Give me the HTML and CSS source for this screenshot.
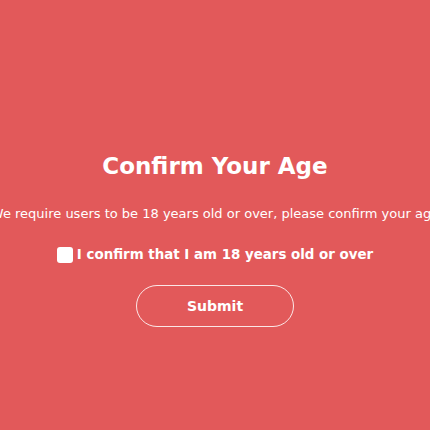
FILE: index.html
```html
<!doctype html>
<html>
<head>
    <meta charset="utf-8" />
    <meta name="viewport" content="width=device-width, initial-scale=1" />
    <title>Age gate</title>
    <link rel="stylesheet" href="styles.css">
</head>
<body>
    <form class="AgeGate">
        <h1 class="AgeGate_title">Confirm Your Age</h1>
        <p class="AgeGate_text">We require users to be 18 years old or over, please confirm your age</p>
        <label class="AgeGate_check">
            <input type="checkbox" name="confirm">
            <span class="AgeGate_box"></span>
            I confirm that I am 18 years old or over
        </label>
        <button class="AgeGate_submit" type="submit">Submit</button>
    </form>
</body>
</html>
```

FILE: styles.css
```css
html, body {
    margin: 0;
    height: 100%;
}
body {
    background: #e2595a;
    color: #fff;
    font-family: 'DejaVu Sans', sans-serif;
    overflow: hidden;
}
.AgeGate {
    display: flex;
    flex-direction: column;
    align-items: center;
    padding-top: 150px;
}
.AgeGate_title {
    margin: 0;
    font-size: 23px;
    font-weight: 700;
    line-height: 32px;
}
.AgeGate_text {
    margin: 22px 0 0;
    font-size: 13px;
    line-height: 20px;
    white-space: nowrap;
}
.AgeGate_check {
    display: flex;
    align-items: center;
    gap: 4px;
    margin-top: 21px;
    font-size: 13.4px;
    font-weight: 700;
    line-height: 20px;
}
.AgeGate_check input {
    display: none;
}
.AgeGate_box {
    width: 16px;
    height: 16px;
    border-radius: 3px;
    background: #fff;
}
.AgeGate_submit {
    margin-top: 20px;
    width: 158px;
    height: 42px;
    border: 1px solid rgba(255, 255, 255, 0.85);
    border-radius: 21px;
    background: transparent;
    color: #fff;
    font-family: inherit;
    font-size: 14px;
    font-weight: 700;
}
```
